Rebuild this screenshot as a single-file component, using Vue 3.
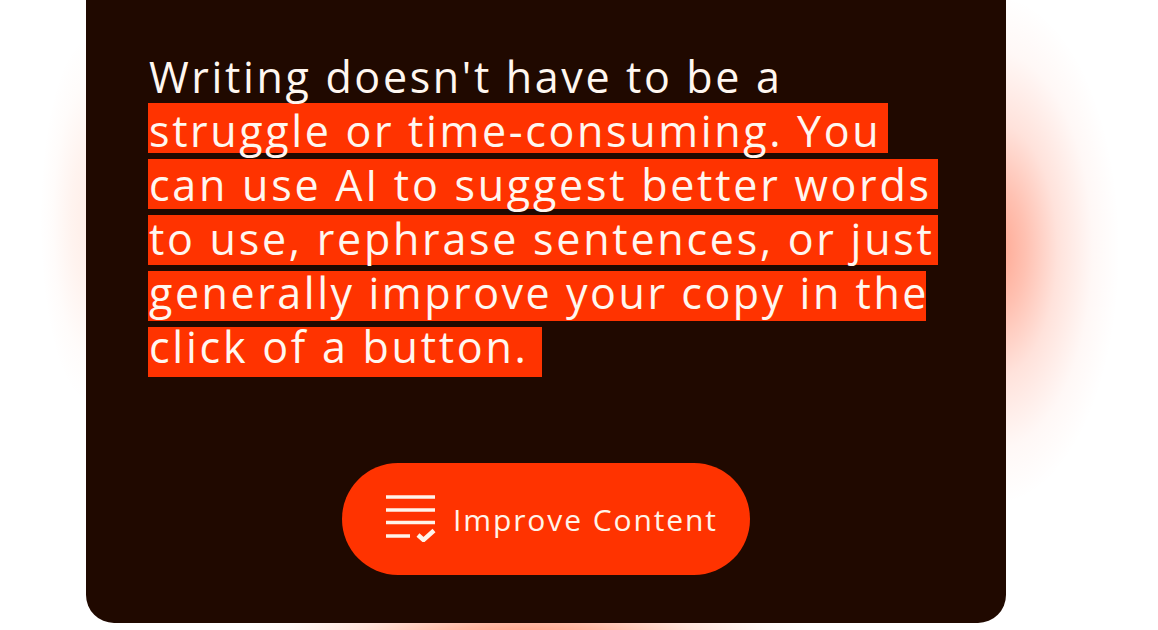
<script setup>
const lines = [
  { text: "Writing doesn't have to be a", spacing: 2.65 },
  { text: 'struggle or time-consuming. You', spacing: 2.65 },
  { text: 'can use AI to suggest better words', spacing: 2.75 },
  { text: 'to use, rephrase sentences, or just', spacing: 2.75 },
  { text: 'generally improve your copy in the', spacing: 2.55 },
  { text: 'click of a button.', spacing: 2.75 },
]
const marks = [
  { id: 1, width: 740 },
  { id: 2, width: 790 },
  { id: 3, width: 790 },
  { id: 4, width: 778 },
  { id: 5, width: 394 },
]
</script>

<template>
  <div class="page">
    <section class="card">
      <div class="copy">
        <div class="marks" aria-hidden="true">
          <span v-for="m in marks" :key="m.id" class="mark" :style="{ width: m.width + 'px' }"></span>
        </div>
        <p v-for="l in lines" :key="l.text" class="line" :style="{ letterSpacing: l.spacing + 'px' }">{{ l.text }}</p>
      </div>
      <button class="improve" type="button">
        <svg class="icon" width="50" height="48" viewBox="0 0 50 48" fill="none" stroke="#fff4ea" stroke-width="3.4">
          <path d="M0 3H49M0 16H49M0 28.5H49M0 42H24" />
          <path d="M32 41L37.5 46L48 36.5" stroke-width="4.4" />
        </svg>
        <span>Improve Content</span>
      </button>
    </section>
  </div>
</template>

<style>
html, body { margin: 0; background: #fff; }
</style>

<style scoped>
.page {
  width: 1158px;
  height: 630px;
  overflow: hidden;
  background-color: #fff;
  background-image:
    radial-gradient(ellipse 125px 255px at 995px 250px, rgba(255, 51, 0, .44) 0%, rgba(255, 51, 0, .3) 25%, rgba(255, 51, 0, .14) 50%, rgba(255, 51, 0, .035) 78%, rgba(255, 51, 0, 0) 100%),
    radial-gradient(ellipse 52px 185px at 92px 220px, rgba(255, 90, 30, .11) 0%, rgba(255, 90, 30, .07) 40%, rgba(255, 90, 30, .02) 75%, rgba(255, 90, 30, 0) 100%),
    radial-gradient(ellipse 290px 60px at 527px 640px, rgba(255, 51, 0, .5) 0%, rgba(255, 51, 0, .34) 30%, rgba(255, 51, 0, .14) 60%, rgba(255, 51, 0, .03) 85%, rgba(255, 51, 0, 0) 100%);
}
.card {
  box-sizing: border-box;
  width: 920px;
  height: 623px;
  margin-left: 86px;
  padding: 50px 0 0 63px;
  background: #200900;
  border-radius: 0 0 28px 28px;
  display: flex;
  flex-direction: column;
}
.copy {
  position: relative;
  font-family: "Open Sans", sans-serif;
  font-weight: 400;
  font-size: 43px;
  line-height: 54px;
  color: #fff7f0;
  white-space: nowrap;
}
.marks {
  position: absolute;
  left: -1px;
  top: 53px;
  display: flex;
  flex-direction: column;
  gap: 6px;
}
.mark {
  display: block;
  height: 50px;
  background: #ff3300;
}
.line {
  position: relative;
  margin: 0;
  height: 54px;
}
.improve {
  align-self: flex-start;
  margin: 89px 0 0 193px;
  width: 408px;
  height: 112px;
  padding: 0 0 0 44px;
  border: 0;
  border-radius: 56px;
  background: #ff3300;
  color: #fff4ea;
  display: flex;
  align-items: center;
  gap: 17px;
  font-family: "Open Sans", sans-serif;
  font-weight: 400;
  font-size: 30px;
  letter-spacing: 1.9px;
}
.icon {
  flex: none;
  margin-top: -2px;
}
</style>
